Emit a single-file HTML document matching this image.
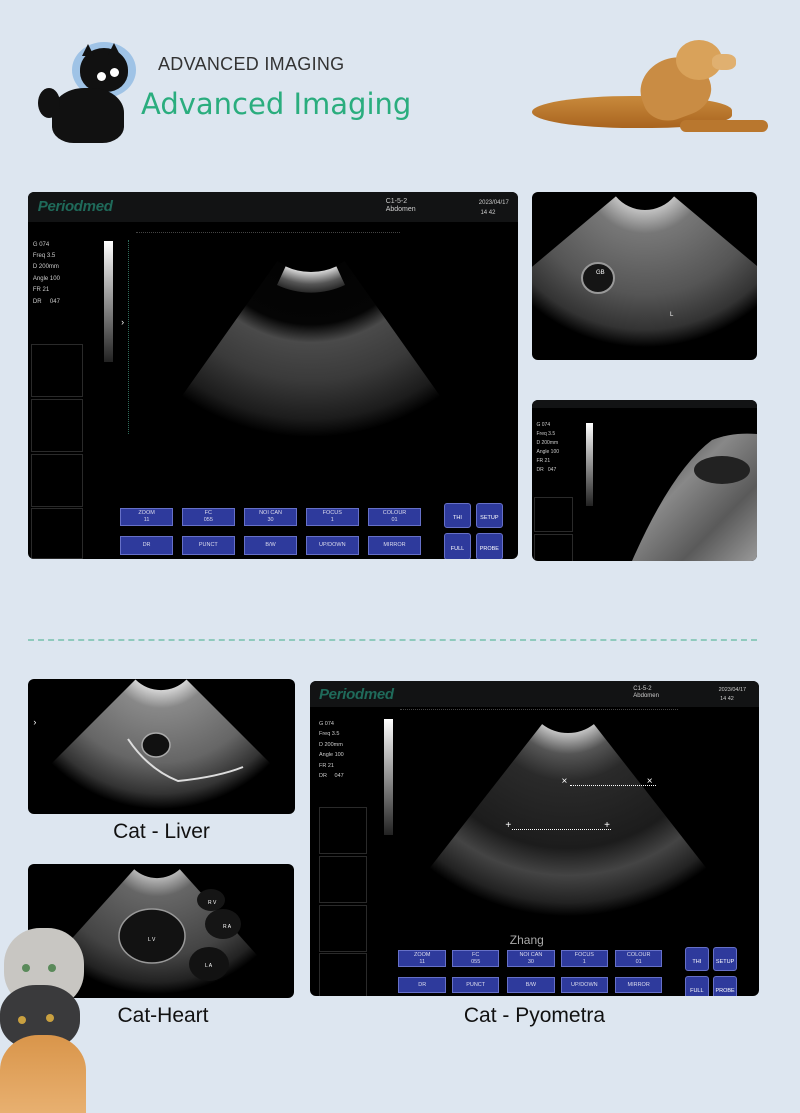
<!DOCTYPE html>
<html><head><meta charset="utf-8"><style>
*{margin:0;padding:0;box-sizing:border-box}
body{width:800px;height:1113px;background:#dde6f0;position:relative;overflow:hidden;font-family:"Liberation Sans","DejaVu Sans",sans-serif}
.a{position:absolute}
.scr{position:absolute;background:#000;border-radius:6px;overflow:hidden}
.hdr{position:absolute;left:0;top:0;width:100%;height:8.2%;background:#121314}
.logo{position:absolute;left:2%;top:1.5%;color:#1f6a5a;font-style:italic;font-weight:bold;font-size:15px;letter-spacing:-0.3px}
.info{position:absolute;color:#ccc;font-size:6px;line-height:1.25}
.box{position:absolute;left:0.6%;width:10.6%;border:1px solid #2a2a2a}
.gbar{position:absolute;left:15.5%;top:13.4%;width:1.9%;height:33%;background:linear-gradient(#fff,#222)}
.btn{position:absolute;background:#2e3a9c;border:1px solid #6670c8;color:#dde;font-size:5.5px;text-align:center;line-height:1.2;padding-top:1px}
.ib{position:absolute;background:#2e3a9c;border:1px solid #6670c8;border-radius:3px;color:#fff;font-size:5.5px;text-align:center}
svg.f{position:absolute;left:0;top:0}
.lbl{position:absolute;font-size:21px;color:#111;text-align:center}
</style></head><body>

<!-- cat logo -->
<div class="a" style="left:72px;top:42px;width:64px;height:56px;border-radius:50%;background:#9fc3e6"></div>
<div class="a" style="left:80px;top:48px;width:48px;height:44px;border-radius:50% 50% 45% 45%;background:#111"></div>
<div class="a" style="left:82px;top:44px;width:0;height:0;border-left:6px solid transparent;border-right:6px solid transparent;border-bottom:12px solid #111"></div>
<div class="a" style="left:108px;top:43px;width:0;height:0;border-left:6px solid transparent;border-right:6px solid transparent;border-bottom:12px solid #111"></div>
<div class="a" style="left:97px;top:72px;width:9px;height:9px;border-radius:50%;background:#fff"></div>
<div class="a" style="left:110px;top:68px;width:9px;height:9px;border-radius:50%;background:#fff"></div>
<div class="a" style="left:52px;top:88px;width:72px;height:55px;border-radius:45% 45% 30% 30%;background:#111"></div>
<div class="a" style="left:38px;top:88px;width:22px;height:30px;border-radius:50%;background:#111"></div>
<div class="a" style="left:158px;top:54px;font-size:18px;color:#333;letter-spacing:0.3px">ADVANCED IMAGING</div>
<div class="a" style="left:141px;top:87px;font-size:29px;color:#2aad7e;font-family:'DejaVu Sans',sans-serif">Advanced Imaging</div>

<!-- dog -->
<div class="a" style="left:532px;top:96px;width:200px;height:32px;border-radius:50% 45% 40% 50%;background:linear-gradient(#c88a3c,#a9641f)"></div>
<div class="a" style="left:640px;top:58px;width:70px;height:60px;border-radius:50% 50% 40% 40%;background:#c98c44;transform:rotate(-20deg)"></div>
<div class="a" style="left:676px;top:40px;width:46px;height:40px;border-radius:50%;background:#d9a25a"></div>
<div class="a" style="left:712px;top:54px;width:24px;height:16px;border-radius:40%;background:#e0b070"></div>
<div class="a" style="left:680px;top:120px;width:88px;height:12px;border-radius:6px;background:#b9772e"></div>

<!-- main scanner 1 -->
<div class="scr" style="left:28px;top:192px;width:490px;height:367px">
 <svg class="f" width="490" height="367">
  <defs>
   <radialGradient id="g1" gradientUnits="userSpaceOnUse" cx="283" cy="20" r="225">
    <stop offset="0" stop-color="#000"/><stop offset="0.5" stop-color="#050505"/><stop offset="0.58" stop-color="#4a4a4a"/><stop offset="0.75" stop-color="#3a3a3a"/><stop offset="0.92" stop-color="#1c1c1c"/><stop offset="1" stop-color="#000"/>
   </radialGradient>
   <radialGradient id="p1" gradientUnits="userSpaceOnUse" cx="283" cy="20" r="85">
    <stop offset="0.7" stop-color="#ddd"/><stop offset="0.85" stop-color="#555"/><stop offset="1" stop-color="#111"/>
   </radialGradient>
  </defs>
  <path d="M249.5,69 L153.9,204 A225,225 0 0 0 412.1,204 L316.5,69 A60,60 0 0 1 249.5,69 Z" fill="url(#g1)"/>
  <path d="M257.6,74.4 L249,93 A80,80 0 0 0 317,93 L308.4,74.4 A60,60 0 0 1 257.6,74.4 Z" fill="url(#p1)"/>
 </svg>
 <div class="hdr"></div>
 <div class="logo">Periodmed</div>
 <div class="info" style="left:73%;top:1.5%;font-size:7px">C1-5-2<br>Abdomen</div>
 <div class="info" style="left:92%;top:1.5%;font-size:6px;line-height:1.7">2023/04/17<br>&nbsp;14 42</div>
 <div class="info" style="left:1%;top:13%;line-height:1.9">G 074<br>Freq 3.5<br>D 200mm<br>Angle 100<br>FR 21<br>DR &nbsp;&nbsp;&nbsp;&nbsp;047</div>
 <div class="gbar"></div>
 <div class="box" style="top:41.4%;height:14.4%"></div>
 <div class="box" style="top:56.4%;height:14.4%"></div>
 <div class="box" style="top:71.4%;height:14.4%"></div>
 <div class="box" style="top:86.1%;height:14%"></div>
 <div class="a" style="left:22%;top:11%;width:54%;border-top:1px dotted #444"></div>
 <div class="a" style="left:20.5%;top:13%;height:53%;border-left:1px dotted #2f6a5a"></div>
 <div class="info" style="left:19%;top:34%;font-size:9px;color:#fff">›</div>
 <div class="btn" style="left:18.8%;top:86.1%;width:10.8%;height:4.9%">ZOOM<br>11</div>
 <div class="btn" style="left:31.4%;top:86.1%;width:10.8%;height:4.9%">FC<br>055</div>
 <div class="btn" style="left:44.1%;top:86.1%;width:10.8%;height:4.9%">NOI CAN<br>30</div>
 <div class="btn" style="left:56.7%;top:86.1%;width:10.8%;height:4.9%">FOCUS<br>1</div>
 <div class="btn" style="left:69.4%;top:86.1%;width:10.8%;height:4.9%">COLOUR<br>01</div>
 <div class="btn" style="left:18.8%;top:93.7%;width:10.8%;height:5.2%;padding-top:5px">DR</div>
 <div class="btn" style="left:31.4%;top:93.7%;width:10.8%;height:5.2%;padding-top:5px">PUNCT</div>
 <div class="btn" style="left:44.1%;top:93.7%;width:10.8%;height:5.2%;padding-top:5px">B/W</div>
 <div class="btn" style="left:56.7%;top:93.7%;width:10.8%;height:5.2%;padding-top:5px">UP/DOWN</div>
 <div class="btn" style="left:69.4%;top:93.7%;width:10.8%;height:5.2%;padding-top:5px">MIRROR</div>
 <div class="ib" style="left:84.9%;top:84.7%;width:5.5%;height:6.8%;padding-top:11px">THI</div>
 <div class="ib" style="left:91.4%;top:84.7%;width:5.5%;height:6.8%;padding-top:11px">SETUP</div>
 <div class="ib" style="left:84.9%;top:92.9%;width:5.5%;height:7.5%;padding-top:12px">FULL</div>
 <div class="ib" style="left:91.4%;top:92.9%;width:5.5%;height:7.5%;padding-top:12px">PROBE</div>
</div>

<!-- right top -->
<div class="scr" style="left:532px;top:192px;width:225px;height:168px">
 <svg class="f" width="225" height="168">
  <defs><radialGradient id="g2" gradientUnits="userSpaceOnUse" cx="113" cy="-20" r="175">
   <stop offset="0.2" stop-color="#ccc"/><stop offset="0.35" stop-color="#777"/><stop offset="0.7" stop-color="#555"/><stop offset="0.9" stop-color="#333"/><stop offset="1" stop-color="#000"/>
  </radialGradient></defs>
  <path d="M83.9,4.4 L-21,92.5 A175,175 0 0 0 247,92.5 L142.1,4.4 A38,38 0 0 1 83.9,4.4 Z" fill="url(#g2)"/>
  <ellipse cx="66" cy="86" rx="16" ry="15" fill="#151515" stroke="#999" stroke-width="2"/>
  <text x="64" y="82" fill="#fff" font-size="6">GB</text>
  <text x="138" y="124" fill="#fff" font-size="6">L</text>
 </svg>
</div>

<!-- right bottom -->
<div class="scr" style="left:532px;top:400px;width:225px;height:161px">
 <svg class="f" width="225" height="161">
  <defs><linearGradient id="g3" x1="0" y1="0" x2="1" y2="1">
   <stop offset="0" stop-color="#222"/><stop offset="0.4" stop-color="#888"/><stop offset="0.7" stop-color="#5a5a5a"/><stop offset="1" stop-color="#999"/>
  </linearGradient></defs>
  <path d="M180,40 Q200,32 225,34 L225,161 L100,161 Q140,70 180,40 Z" fill="url(#g3)"/>
  <ellipse cx="190" cy="70" rx="28" ry="14" fill="#222"/>
 </svg>
 <div class="hdr" style="height:5%"></div>
 <div class="info" style="left:2%;top:13%;font-size:5px;line-height:1.8">G 074<br>Freq 3.5<br>D 200mm<br>Angle 100<br>FR 21<br>DR &nbsp;&nbsp;047</div>
 <div class="a" style="left:24%;top:14%;width:3%;height:52%;background:linear-gradient(#fff,#222)"></div>
 <div class="box" style="left:1%;width:17%;top:60%;height:22%"></div>
 <div class="box" style="left:1%;width:17%;top:83%;height:22%"></div>
</div>

<!-- dashed separator -->
<div class="a" style="left:28px;top:639px;width:729px;border-top:2px dashed #8fcabd"></div>

<!-- cat liver -->
<div class="scr" style="left:28px;top:679px;width:267px;height:135px">
 <svg class="f" width="267" height="135">
  <defs><radialGradient id="g4" gradientUnits="userSpaceOnUse" cx="133" cy="-25" r="155">
   <stop offset="0.22" stop-color="#ddd"/><stop offset="0.35" stop-color="#888"/><stop offset="0.7" stop-color="#666"/><stop offset="0.9" stop-color="#333"/><stop offset="1" stop-color="#000"/>
  </radialGradient></defs>
  <path d="M107.5,0.5 L23.4,84.6 A155,155 0 0 0 242.6,84.6 L158.5,0.5 A36,36 0 0 1 107.5,0.5 Z" fill="url(#g4)"/>
  <ellipse cx="128" cy="66" rx="14" ry="12" fill="#111" stroke="#aaa" stroke-width="1.5"/>
  <path d="M100,60 Q120,90 150,102 Q190,98 215,88" stroke="#ddd" stroke-width="2" fill="none"/>
 </svg>
 <div class="info" style="left:2%;top:28%;font-size:9px;color:#fff">›</div>
</div>
<div class="lbl" style="left:28px;top:820px;width:267px">Cat - Liver</div>

<!-- cat heart -->
<div class="scr" style="left:28px;top:864px;width:266px;height:134px">
 <svg class="f" width="266" height="134">
  <defs><radialGradient id="g5" gradientUnits="userSpaceOnUse" cx="129" cy="-20" r="150">
   <stop offset="0.22" stop-color="#bbb"/><stop offset="0.35" stop-color="#666"/><stop offset="0.75" stop-color="#444"/><stop offset="0.92" stop-color="#222"/><stop offset="1" stop-color="#000"/>
  </radialGradient></defs>
  <path d="M106.2,5.3 L28.6,91.5 A150,150 0 0 0 229.4,91.5 L151.8,5.3 A34,34 0 0 1 106.2,5.3 Z" fill="url(#g5)"/>
  <ellipse cx="124" cy="72" rx="33" ry="27" fill="#121212" stroke="#999" stroke-width="1.5"/>
  <ellipse cx="181" cy="100" rx="20" ry="17" fill="#121212"/>
  <ellipse cx="195" cy="60" rx="18" ry="15" fill="#151515"/>
  <ellipse cx="183" cy="36" rx="14" ry="11" fill="#151515"/>
  <text x="120" y="77" fill="#fff" font-size="5">L V</text>
  <text x="177" y="103" fill="#fff" font-size="5">L A</text>
  <text x="195" y="64" fill="#fff" font-size="5">R A</text>
  <text x="180" y="40" fill="#fff" font-size="5">R V</text>
 </svg>
</div>
<div class="lbl" style="left:60px;top:1004px;width:206px">Cat-Heart</div>

<!-- cats stack -->
<div class="a" style="left:4px;top:928px;width:80px;height:80px;border-radius:45%;background:#c8c6c2"></div>
<div class="a" style="left:0px;top:985px;width:80px;height:65px;border-radius:45%;background:#3a3a3c"></div>
<div class="a" style="left:0px;top:1035px;width:86px;height:78px;border-radius:45% 45% 0 0;background:linear-gradient(#d9954a,#e8b070)"></div>
<div class="a" style="left:22px;top:964px;width:8px;height:8px;border-radius:50%;background:#5a8a5a"></div>
<div class="a" style="left:48px;top:964px;width:8px;height:8px;border-radius:50%;background:#5a8a5a"></div>
<div class="a" style="left:18px;top:1016px;width:8px;height:8px;border-radius:50%;background:#c9a040"></div>
<div class="a" style="left:46px;top:1014px;width:8px;height:8px;border-radius:50%;background:#c9a040"></div>

<!-- pyometra scanner -->
<div class="scr" style="left:310px;top:681px;width:449px;height:315px">
 <svg class="f" width="449" height="315">
  <defs><radialGradient id="g6" gradientUnits="userSpaceOnUse" cx="258" cy="10" r="225">
   <stop offset="0.18" stop-color="#ccc"/><stop offset="0.28" stop-color="#555"/><stop offset="0.4" stop-color="#2a2a2a"/><stop offset="0.7" stop-color="#1c1c1c"/><stop offset="0.82" stop-color="#444"/><stop offset="0.94" stop-color="#222"/><stop offset="1" stop-color="#000"/>
  </radialGradient></defs>
  <path d="M232.1,43.1 L119.5,187.3 A225,225 0 0 0 396.5,187.3 L283.9,43.1 A42,42 0 0 1 232.1,43.1 Z" fill="url(#g6)"/>
 </svg>
 <div class="hdr"></div>
 <div class="logo">Periodmed</div>
 <div class="info" style="left:72%;top:1.5%;font-size:6px">C1-5-2<br>Abdomen</div>
 <div class="info" style="left:91%;top:1.5%;font-size:5.5px;line-height:1.7">2023/04/17<br>&nbsp;14 42</div>
 <div class="info" style="left:2%;top:12%;font-size:5.5px;line-height:1.9">G 074<br>Freq 3.5<br>D 200mm<br>Angle 100<br>FR 21<br>DR &nbsp;&nbsp;&nbsp;&nbsp;047</div>
 <div class="gbar" style="left:16.5%;top:12%;height:37%"></div>
 <div class="box" style="left:2%;top:40%;height:15%"></div>
 <div class="box" style="left:2%;top:55.5%;height:15%"></div>
 <div class="box" style="left:2%;top:71%;height:15%"></div>
 <div class="box" style="left:2%;top:86.5%;height:15%"></div>
 <div class="a" style="left:20%;top:9%;width:62%;border-top:1px dotted #444"></div>
 <div class="a" style="left:58%;top:33%;width:19%;border-top:1px dotted #fff"></div>
 <div class="info" style="left:56%;top:30%;font-size:10px;color:#fff">×</div>
 <div class="info" style="left:75%;top:30%;font-size:10px;color:#fff">×</div>
 <div class="a" style="left:45%;top:47%;width:22%;border-top:1px dotted #fff"></div>
 <div class="info" style="left:43.5%;top:44%;font-size:10px;color:#fff">+</div>
 <div class="info" style="left:65.5%;top:44%;font-size:10px;color:#fff">+</div>
 <div class="info" style="left:44.5%;top:80%;font-size:12px;color:#aaa">Zhang</div>
 <div class="btn" style="left:19.7%;top:85.5%;width:10.6%;height:5.2%">ZOOM<br>11</div>
 <div class="btn" style="left:31.6%;top:85.5%;width:10.6%;height:5.2%">FC<br>055</div>
 <div class="btn" style="left:43.9%;top:85.5%;width:10.6%;height:5.2%">NOI CAN<br>30</div>
 <div class="btn" style="left:55.8%;top:85.5%;width:10.6%;height:5.2%">FOCUS<br>1</div>
 <div class="btn" style="left:67.9%;top:85.5%;width:10.6%;height:5.2%">COLOUR<br>01</div>
 <div class="btn" style="left:19.7%;top:94%;width:10.6%;height:5.2%;padding-top:4px">DR</div>
 <div class="btn" style="left:31.6%;top:94%;width:10.6%;height:5.2%;padding-top:4px">PUNCT</div>
 <div class="btn" style="left:43.9%;top:94%;width:10.6%;height:5.2%;padding-top:4px">B/W</div>
 <div class="btn" style="left:55.8%;top:94%;width:10.6%;height:5.2%;padding-top:4px">UP/DOWN</div>
 <div class="btn" style="left:67.9%;top:94%;width:10.6%;height:5.2%;padding-top:4px">MIRROR</div>
 <div class="ib" style="left:83.5%;top:84.5%;width:5.3%;height:7.5%;padding-top:11px">THI</div>
 <div class="ib" style="left:89.8%;top:84.5%;width:5.3%;height:7.5%;padding-top:11px">SETUP</div>
 <div class="ib" style="left:83.5%;top:93.5%;width:5.3%;height:8%;padding-top:11px">FULL</div>
 <div class="ib" style="left:89.8%;top:93.5%;width:5.3%;height:8%;padding-top:11px">PROBE</div>
</div>
<div class="lbl" style="left:310px;top:1004px;width:449px">Cat - Pyometra</div>
</body></html>
